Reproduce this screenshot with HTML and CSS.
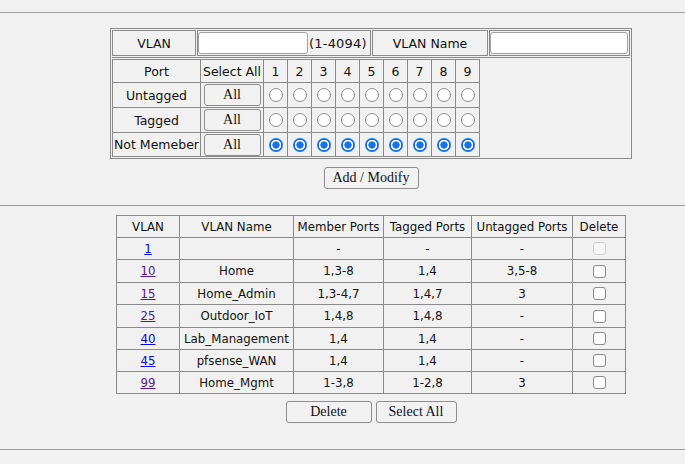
FILE: index.html
```html
<!DOCTYPE html>
<html lang="en">
<head>
<meta charset="utf-8">
<title>VLAN Configuration</title>
<link rel="stylesheet" href="styles.css">
</head>
<body>
<hr class="rule">
<section class="form-section">
  <form class="vlan-form">
    <div class="id-row">
      <div class="id-cell vid-label">VLAN</div>
      <div class="id-cell vid-field"><input class="text-input vid-input" type="text"><span class="range">(1-4094)</span></div>
      <div class="id-cell name-label">VLAN Name</div>
      <div class="id-cell name-field"><input class="text-input name-input" type="text"></div>
    </div>
    <div class="port-area">
      <div class="port-grid">
        <div class="pc">Port</div><div class="pc">Select All</div>
        <div class="pc">1</div><div class="pc">2</div><div class="pc">3</div><div class="pc">4</div><div class="pc">5</div><div class="pc">6</div><div class="pc">7</div><div class="pc">8</div><div class="pc">9</div>

        <div class="pc">Untagged</div><div class="pc"><button type="button" class="btn all-btn">All</button></div>
        <div class="pc"><input class="radio" type="radio" name="p1"></div><div class="pc"><input class="radio" type="radio" name="p2"></div><div class="pc"><input class="radio" type="radio" name="p3"></div><div class="pc"><input class="radio" type="radio" name="p4"></div><div class="pc"><input class="radio" type="radio" name="p5"></div><div class="pc"><input class="radio" type="radio" name="p6"></div><div class="pc"><input class="radio" type="radio" name="p7"></div><div class="pc"><input class="radio" type="radio" name="p8"></div><div class="pc"><input class="radio" type="radio" name="p9"></div>

        <div class="pc">Tagged</div><div class="pc"><button type="button" class="btn all-btn">All</button></div>
        <div class="pc"><input class="radio" type="radio" name="p1"></div><div class="pc"><input class="radio" type="radio" name="p2"></div><div class="pc"><input class="radio" type="radio" name="p3"></div><div class="pc"><input class="radio" type="radio" name="p4"></div><div class="pc"><input class="radio" type="radio" name="p5"></div><div class="pc"><input class="radio" type="radio" name="p6"></div><div class="pc"><input class="radio" type="radio" name="p7"></div><div class="pc"><input class="radio" type="radio" name="p8"></div><div class="pc"><input class="radio" type="radio" name="p9"></div>

        <div class="pc">Not Memeber</div><div class="pc"><button type="button" class="btn all-btn">All</button></div>
        <div class="pc"><input class="radio" type="radio" name="p1" checked></div><div class="pc"><input class="radio" type="radio" name="p2" checked></div><div class="pc"><input class="radio" type="radio" name="p3" checked></div><div class="pc"><input class="radio" type="radio" name="p4" checked></div><div class="pc"><input class="radio" type="radio" name="p5" checked></div><div class="pc"><input class="radio" type="radio" name="p6" checked></div><div class="pc"><input class="radio" type="radio" name="p7" checked></div><div class="pc"><input class="radio" type="radio" name="p8" checked></div><div class="pc"><input class="radio" type="radio" name="p9" checked></div>
      </div>
    </div>
  </form>
  <button type="button" class="btn add-btn">Add / Modify</button>
</section>
<hr class="rule">
<section class="list-section">
  <div class="vlan-list">
    <div class="lc">VLAN</div><div class="lc">VLAN Name</div><div class="lc">Member Ports</div><div class="lc">Tagged Ports</div><div class="lc">Untagged Ports</div><div class="lc">Delete</div>

    <div class="lc"><a href="#" class="vlink">1</a></div><div class="lc"></div><div class="lc">-</div><div class="lc">-</div><div class="lc">-</div><div class="lc"><input type="checkbox" class="check" disabled></div>

    <div class="lc"><a href="#" class="vlink visited">10</a></div><div class="lc">Home</div><div class="lc">1,3-8</div><div class="lc">1,4</div><div class="lc">3,5-8</div><div class="lc"><input type="checkbox" class="check"></div>

    <div class="lc"><a href="#" class="vlink visited">15</a></div><div class="lc">Home_Admin</div><div class="lc">1,3-4,7</div><div class="lc">1,4,7</div><div class="lc">3</div><div class="lc"><input type="checkbox" class="check"></div>

    <div class="lc"><a href="#" class="vlink visited">25</a></div><div class="lc">Outdoor_IoT</div><div class="lc">1,4,8</div><div class="lc">1,4,8</div><div class="lc">-</div><div class="lc"><input type="checkbox" class="check"></div>

    <div class="lc"><a href="#" class="vlink">40</a></div><div class="lc">Lab_Management</div><div class="lc">1,4</div><div class="lc">1,4</div><div class="lc">-</div><div class="lc"><input type="checkbox" class="check"></div>

    <div class="lc"><a href="#" class="vlink">45</a></div><div class="lc">pfsense_WAN</div><div class="lc">1,4</div><div class="lc">1,4</div><div class="lc">-</div><div class="lc"><input type="checkbox" class="check"></div>

    <div class="lc"><a href="#" class="vlink visited">99</a></div><div class="lc">Home_Mgmt</div><div class="lc">1-3,8</div><div class="lc">1-2,8</div><div class="lc">3</div><div class="lc"><input type="checkbox" class="check"></div>
  </div>
  <div class="list-actions">
    <button type="button" class="btn del-btn">Delete</button>
    <button type="button" class="btn sel-btn">Select All</button>
  </div>
</section>
<hr class="rule">
</body>
</html>
```

FILE: styles.css
```css
html, body {
  margin: 0;
  background: #f1f1f1;
}
body {
  padding-top: 12px;
  font-family: "DejaVu Sans", "Noto Sans", sans-serif;
  color: #111;
}
.rule {
  margin: 0;
  height: 0;
  border: 0;
  border-top: 1px solid #9c9c9c;
}
.form-section,
.list-section {
  padding-left: 57px;
  display: flex;
  flex-direction: column;
  align-items: center;
}
.form-section {
  padding-top: 15px;
  padding-bottom: 16px;
}
.list-section {
  padding-top: 9px;
  padding-bottom: 26px;
}

/* ---------- VLAN form ---------- */
.vlan-form {
  margin: 0;
  width: 522px;
  box-sizing: border-box;
  border: 1px solid #8a8a8a;
  padding: 1px;
  font-size: 12.5px;
}
.id-row {
  display: flex;
  gap: 1px;
}
.id-cell {
  box-sizing: border-box;
  height: 26px;
  border: 1px solid #8a8a8a;
  display: flex;
  align-items: center;
}
.vid-label { width: 84px; justify-content: center; }
.vid-field { width: 174px; }
.name-label { width: 116px; justify-content: center; }
.name-field { width: 141px; }
.text-input {
  box-sizing: border-box;
  height: 22px;
  margin: 0;
  padding: 0 3px;
  background: #fff;
  border: 1px solid #a2a2a2;
  border-radius: 3px;
  font-family: inherit;
  font-size: 12px;
}
.vid-input { width: 110px; }
.name-input { width: 138px; }
.range {
  font-size: 13px;
  letter-spacing: 0.2px;
  margin-left: 1px;
}
.port-area {
  margin-top: 1px;
  border-top: 1px solid #8a8a8a;
  padding-top: 1px;
}
.port-grid {
  display: grid;
  grid-template-columns: 87px 62px repeat(9, 23px);
  grid-template-rows: 22px 24px 24px 23px;
  gap: 1px;
  width: max-content;
  background: #8a8a8a;
  border: 1px solid #8a8a8a;
}
.pc {
  background: #f1f1f1;
  display: flex;
  align-items: center;
  justify-content: center;
  white-space: nowrap;
}
.radio {
  appearance: none;
  -webkit-appearance: none;
  box-sizing: border-box;
  width: 14px;
  height: 14px;
  margin: 0;
  border-radius: 50%;
  border: 1px solid #8e8e8e;
  background: #fff;
}
.radio:checked {
  border: none;
  background: radial-gradient(circle closest-side, #1672ec 0 48%, #fff 56% 70%, #1672ec 78%);
}

/* ---------- buttons ---------- */
.btn {
  box-sizing: border-box;
  height: 22px;
  margin: 0;
  padding: 0;
  border: 1px solid #8d8d8d;
  border-radius: 3px;
  background: #f2f2f2;
  color: #111;
  font-family: "Liberation Serif", "DejaVu Serif", serif;
  font-size: 14px;
}
.all-btn { width: 57px; }
.add-btn { width: 95px; margin-top: 8px; }
.del-btn { width: 86px; }
.sel-btn { width: 81px; }
.list-actions {
  display: flex;
  gap: 4px;
  margin-top: 7px;
}

/* ---------- VLAN list ---------- */
.vlan-list {
  display: grid;
  grid-template-columns: 62px 113px 89px 87px 100px 52px;
  grid-template-rows: 21px 21px 22px 21px 22px 21px 21px 21px;
  gap: 1px;
  width: max-content;
  background: #8a8a8a;
  border: 1px solid #8a8a8a;
  font-size: 11.8px;
}
.lc {
  background: #f1f1f1;
  display: flex;
  align-items: center;
  justify-content: center;
  white-space: nowrap;
}
.vlink {
  color: #0000ee;
  text-decoration: underline;
}
.vlink.visited {
  color: #551a8b;
}
.check {
  appearance: none;
  -webkit-appearance: none;
  box-sizing: border-box;
  width: 13px;
  height: 13px;
  margin: 0;
  border: 1px solid #8a8a8a;
  border-radius: 3px;
  background: #fff;
}
.check:disabled {
  border-color: #d2d2d2;
  background: #f7f7f7;
}
```
